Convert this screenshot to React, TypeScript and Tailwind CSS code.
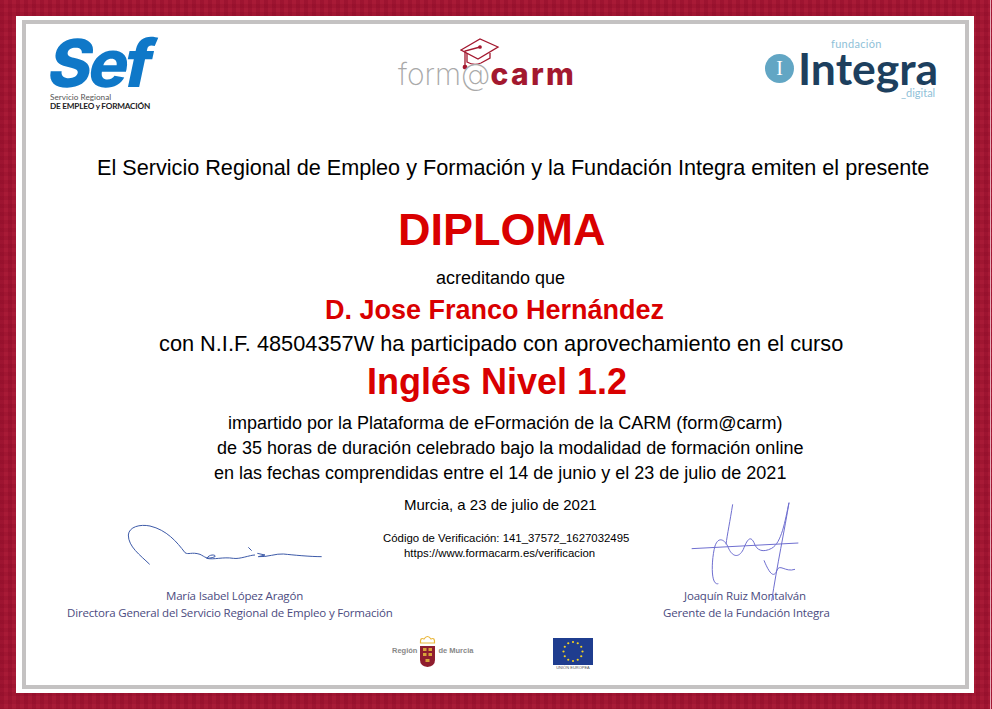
import React from "react";

const Sef = () => (
  <div className="w-[110px] font-['Inter',sans-serif]">
    <div className="h-[58px] -ml-[6px] text-[#0f78c8] text-[66px] leading-[58px] font-extrabold -skew-x-12 origin-bottom-left tracking-[-3.5px] whitespace-nowrap">Sef</div>
    <div className="mt-[1px] font-['Lato',sans-serif] text-[8.2px] leading-[9px] text-[#555]">Servicio Regional</div>
    <div className="font-['Lato',sans-serif] text-[8.2px] leading-[9px] font-bold text-[#222] whitespace-nowrap tracking-[-0.2px]">DE EMPLEO y FORMACIÓN</div>
  </div>
);

const Formacarm = () => (
  <div className="relative w-[178px] h-[60px]">
    <svg className="absolute left-[62px] top-0" width="40" height="34" viewBox="0 0 40 34" fill="none" stroke="#a3182f" strokeWidth="1.3">
      <path d="M1 12 L20 1 L38 9 L18 21 Z" />
      <path d="M20 9 L5 13 L5 27" />
      <path d="M7 15 L7 24 Q14 28 21 25 L30 20 L30 15" />
      <circle cx="20" cy="9" r="1.2" fill="#a3182f" />
      <circle cx="5" cy="29" r="1.7" fill="#a3182f" />
    </svg>
    <div className="absolute left-0 top-[20px] flex items-baseline font-['Inter',sans-serif] leading-[32px] whitespace-nowrap">
      <span className="text-[30px] font-extralight text-[#a9a9a9]">form@</span>
      <span className="text-[30px] font-extrabold text-[#a3182f] tracking-[2.4px]">carm</span>
    </div>
  </div>
);

const Integra = () => (
  <div className="flex flex-col w-[175px] font-['Lato',sans-serif]">
    <div className="pl-[66px] text-[11px] leading-[13px] text-[#8fc1d8] tracking-[0.3px]">fundación</div>
    <div className="flex items-center h-[36px]">
      <div className="w-[29px] h-[29px] rounded-full bg-[#62a6c4] flex items-center justify-center text-white font-['Liberation_Serif',serif] text-[20px]">I</div>
      <div className="ml-[4px] text-[44.5px] leading-[36px] font-bold text-[#1d3f5e]">Integra</div>
    </div>
    <div className="pl-[136px] text-[11px] leading-[10px] mt-[2px] text-[#8fc1d8]">_digital</div>
  </div>
);

const Sig1 = () => (
  <svg width="340" height="120" viewBox="0 0 1020 360" fill="none" stroke="#3d5aa8" strokeWidth="3">
    <path d="M269 163 C240 135 205 110 205 75 C207 50 240 42 270 48 C320 60 350 95 375 128 C385 135 395 125 420 133 C435 140 440 150 465 140 C470 135 450 130 440 145 C460 150 490 140 520 145 C540 148 570 135 585 135 M565 112 L575 122 M592 130 L615 135 L595 140 C620 142 650 130 670 132 C700 135 750 140 785 140" />
  </svg>
);

const Sig2 = () => (
  <svg width="200" height="135" viewBox="0 0 600 405" fill="none" stroke="#6f6fd0" strokeWidth="3">
    <path d="M248 40 C240 90 232 130 228 160" />
    <path d="M125 173 L445 156" />
    <path d="M205 278 C180 285 185 200 195 165 C205 135 225 145 235 170 C245 195 265 205 280 175 C290 150 300 130 312 155 C320 180 340 185 365 172 C395 155 405 90 417 35" />
    <path d="M417 35 C405 110 380 230 365 330" />
    <path d="M342 208 C355 240 370 265 380 240 C388 215 405 245 435 235" />
  </svg>
);

const Crest = () => (
  <svg className="shrink-0" width="17" height="34" viewBox="0 0 17 34">
    <path d="M1.5 9 Q1 3 5 5 Q8.5 0 12 5 Q16 3 15.5 9 Z" fill="none" stroke="#eab73a" strokeWidth="1.2" />
    <path d="M1 12 H16 V26 Q16 32 8.5 33 Q1 32 1 26 Z" fill="#8f1d2e" />
    <path d="M4 14 h3.5 v3 h-3.5 z M9.5 14 h3.5 v3 h-3.5 z M4 19 h3.5 v3 h-3.5 z M9.5 19 h3.5 v3 h-3.5 z M6.5 25 h4 v3 h-4 z" fill="#d9a33a" />
  </svg>
);

const EuFlag = () => {
  const stars = Array.from({ length: 12 }, (_, i) => {
    const a = (i * Math.PI) / 6;
    return <circle key={i} cx={20 + 9.5 * Math.sin(a)} cy={13.5 - 9.5 * Math.cos(a)} r="1.1" fill="#f4d21f" />;
  });
  return (
    <svg width="40" height="27" viewBox="0 0 40 27">
      <rect width="40" height="27" fill="#1f3d8f" />
      {stars}
    </svg>
  );
};

const Line = ({ pl, className, children }: { pl: string; className: string; children: React.ReactNode }) => (
  <div className={`${pl} ${className} whitespace-nowrap`}>{children}</div>
);

export default function App() {
  return (
    <div className="relative w-[992px] h-[709px] bg-[#a81a36] bg-[linear-gradient(90deg,rgba(120,0,30,0.22)_50%,transparent_50%),linear-gradient(0deg,rgba(120,0,30,0.16)_50%,transparent_50%)] bg-[length:8px_8px] pl-[16px] pr-[18px] pt-[16px] pb-[16px] font-['Liberation_Sans',sans-serif] overflow-hidden">
      <div className="absolute left-[990px] top-0 w-[1px] h-full bg-[#e6aab6]" />
      <div className="h-full bg-white pt-[4px] pr-[5px] pb-[4px] pl-[6px]">
        <div className="h-full border-4 border-[#c4c2c2] bg-white flex flex-col overflow-hidden">
          <div className="flex items-start h-[115px] pt-[10px] pl-[24px]">
            <Sef />
            <div className="ml-[238px] mt-[4px]"><Formacarm /></div>
            <div className="ml-[189px] mt-[3px]"><Integra /></div>
          </div>
          <Line pl="pl-[71px]" className="text-[21.65px] leading-[28px] text-black mt-[15px]">El Servicio Regional de Empleo y Formación y la Fundación Integra emiten el presente</Line>
          <Line pl="pl-[372px]" className="text-[45px] leading-[52px] font-bold text-[#d90000] mt-[22px]">DIPLOMA</Line>
          <Line pl="pl-[410px]" className="text-[18px] leading-[20px] text-black mt-[12px]">acreditando que</Line>
          <Line pl="pl-[299px]" className="text-[27px] leading-[30px] font-bold text-[#d90000] mt-[7px]">D. Jose Franco Hernández</Line>
          <Line pl="pl-[133px]" className="text-[21.75px] leading-[26px] text-black mt-[6px]">con N.I.F. 48504357W ha participado con aprovechamiento en el curso</Line>
          <Line pl="pl-[341px]" className="text-[36px] leading-[40px] font-bold text-[#d90000] mt-[5px]">Inglés Nivel 1.2</Line>
          <Line pl="pl-[202px]" className="text-[18px] leading-[24px] text-black mt-[9px]">impartido por la Plataforma de eFormación de la CARM (form@carm)</Line>
          <Line pl="pl-[191px]" className="text-[18px] leading-[24px] text-black mt-[1px]">de 35 horas de duración celebrado bajo la modalidad de formación online</Line>
          <Line pl="pl-[188px]" className="text-[18px] leading-[24px] text-black mt-[1px]">en las fechas comprendidas entre el 14 de junio y el 23 de julio de 2021</Line>
          <Line pl="pl-[378px]" className="text-[15px] leading-[18px] text-black mt-[11px]">Murcia, a 23 de julio de 2021</Line>
          <div className="relative pl-[357px] pt-[17px] h-[64px] text-[11.4px] leading-[15px] text-black">
            <div className="absolute left-[34px] -top-[4px]"><Sig1 /></div>
            <div>Código de Verificación: 141_37572_1627032495</div>
            <div className="pl-[21px]">https://www.formacarm.es/verificacion</div>
          </div>
          <div className="flex mt-[9px] font-['Open_Sans',sans-serif] text-[11.5px] tracking-[-0.18px] leading-[17px] text-[#4b4b80]">
            <div className="w-[370px] pl-[41px]">
              <div className="pl-[99px]">María Isabel López Aragón</div>
              <div className="whitespace-nowrap">Directora General del Servicio Regional de Empleo y Formación</div>
            </div>
            <div className="relative ml-[267px] w-[200px]">
              <div className="absolute -left-[13px] -top-[96px]"><Sig2 /></div>
              <div className="pl-[21px]">Joaquín Ruiz Montalván</div>
              <div>Gerente de la Fundación Integra</div>
            </div>
          </div>
          <div className="flex items-start pl-[366px] mt-[12px]">
            <div className="flex items-center h-[36px] gap-[2px] text-[7.5px] font-bold text-[#888] w-[80px] whitespace-nowrap">
              <span>Región</span><Crest /><span>de Murcia</span>
            </div>
            <div className="ml-[81px] flex flex-col items-center pt-[5px]">
              <EuFlag />
              <div className="text-[4px] leading-[6px] text-[#555]">UNIÓN EUROPEA</div>
            </div>
          </div>
        </div>
      </div>
    </div>
  );
}
